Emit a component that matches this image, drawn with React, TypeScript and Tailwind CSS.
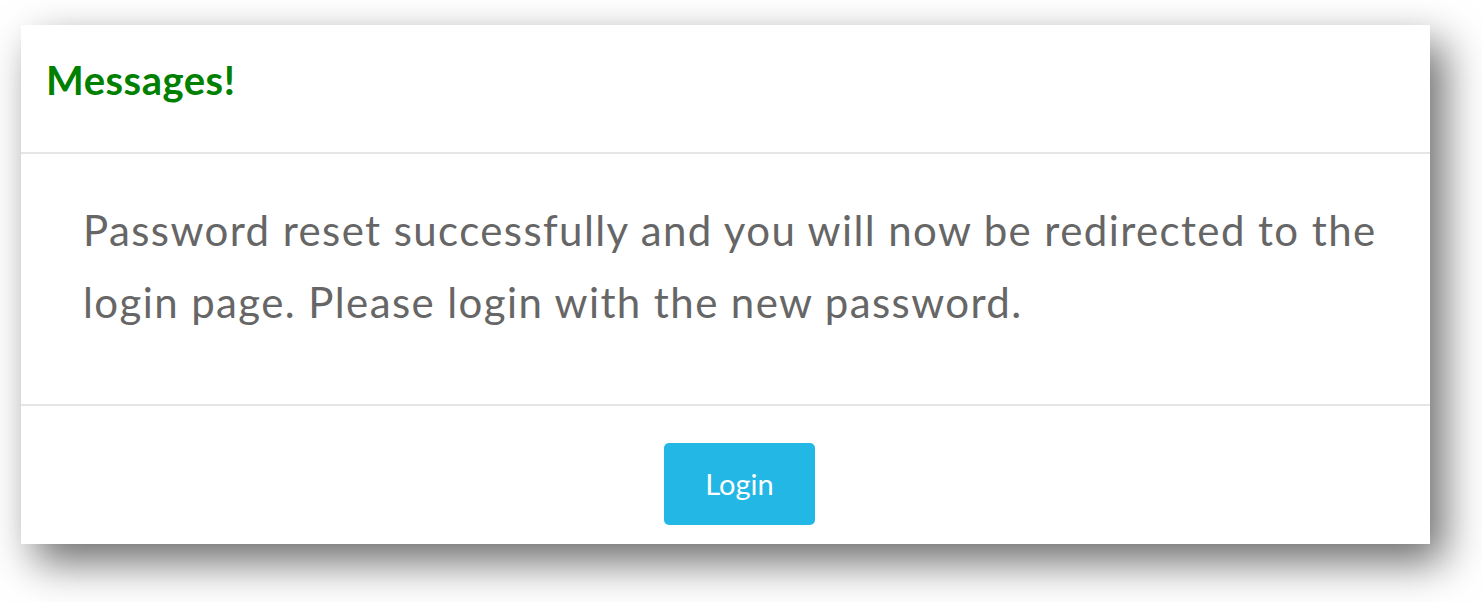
import React from 'react';

export default function App() {
  return (
    <div className="w-[1482px] h-[602px] bg-white overflow-hidden pt-[25px] pl-[21px]" style={{ fontFamily: 'Lato, "Open Sans", sans-serif' }}>
      <div className="w-[1409px] h-[519px] bg-white flex flex-col shadow-[14px_18px_40px_rgba(0,0,0,0.58)]">
        <div className="h-[129px] border-b-2 border-[#e5e5e5] pl-[25px] pt-[31px]">
          <h4 className="text-[40px] leading-[48px] font-bold tracking-[0.5px] text-[#008000]">Messages!</h4>
        </div>
        <div className="h-[252px] border-b-2 border-[#e5e5e5] pl-[62px] pr-[10px] pt-[40px]">
          <p className="text-[42px] leading-[72px] tracking-[1.4px] text-[#666666]">
            Password reset successfully and you will now be redirected to the login page. Please login with the new password.
          </p>
        </div>
        <div className="flex-1 flex justify-center pt-[37px] pl-[28px]">
          <button className="w-[151px] h-[82px] rounded-[5px] bg-[#23b7e5] text-white text-[29px]">
            Login
          </button>
        </div>
      </div>
    </div>
  );
}
